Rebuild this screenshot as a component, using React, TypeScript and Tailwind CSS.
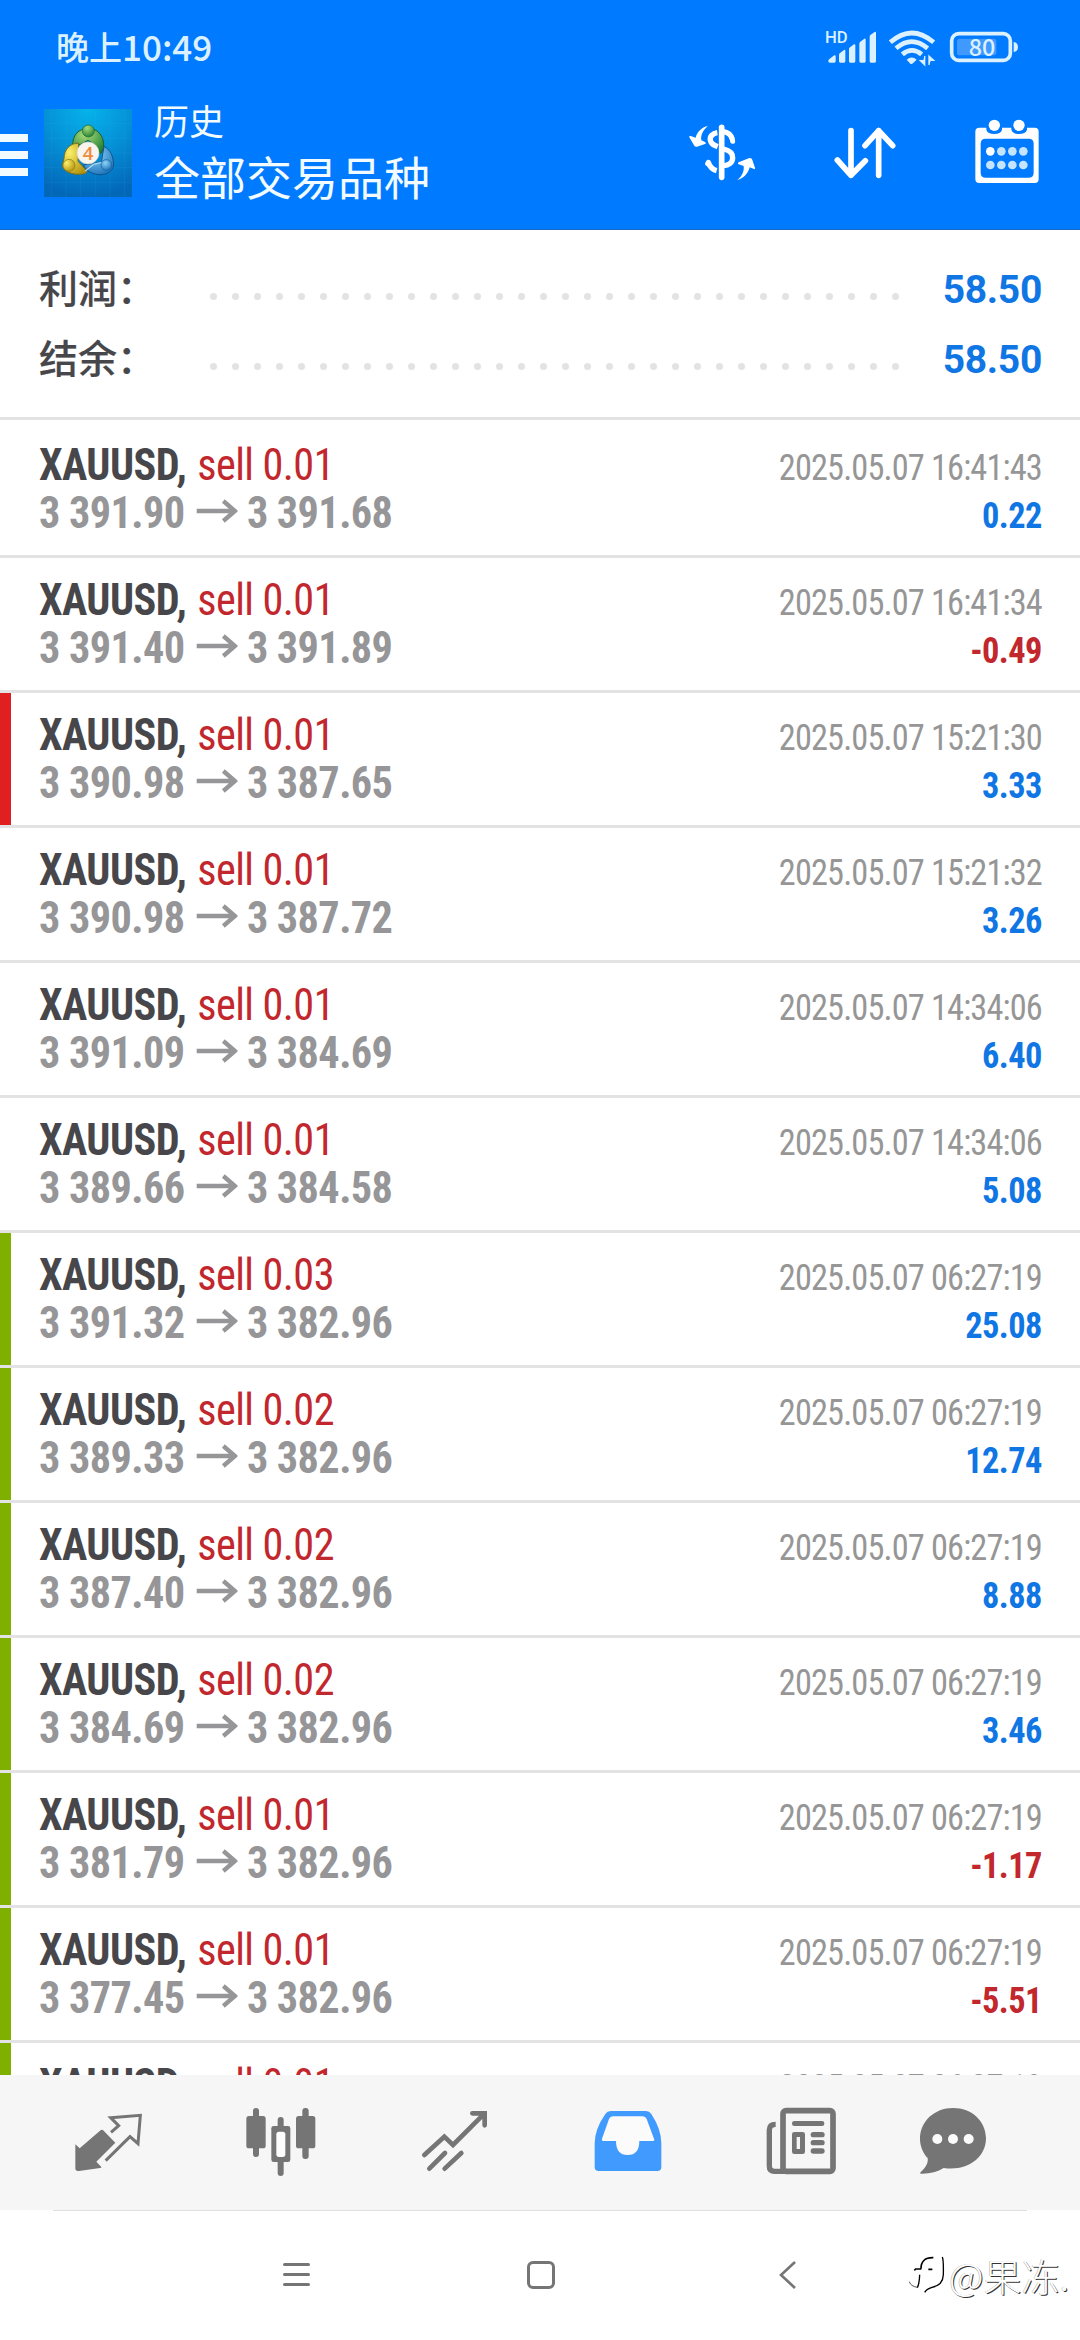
import type { ReactNode } from "react";

type Deal = {
  volume: string;
  open: string;
  close: string;
  time: string;
  profit: string;
  mark?: "red" | "green";
};

const DEALS: Deal[] = [
  { volume: "0.01", open: "3 391.90", close: "3 391.68", time: "2025.05.07 16:41:43", profit: "0.22" },
  { volume: "0.01", open: "3 391.40", close: "3 391.89", time: "2025.05.07 16:41:34", profit: "-0.49" },
  { volume: "0.01", open: "3 390.98", close: "3 387.65", time: "2025.05.07 15:21:30", profit: "3.33", mark: "red" },
  { volume: "0.01", open: "3 390.98", close: "3 387.72", time: "2025.05.07 15:21:32", profit: "3.26" },
  { volume: "0.01", open: "3 391.09", close: "3 384.69", time: "2025.05.07 14:34:06", profit: "6.40" },
  { volume: "0.01", open: "3 389.66", close: "3 384.58", time: "2025.05.07 14:34:06", profit: "5.08" },
  { volume: "0.03", open: "3 391.32", close: "3 382.96", time: "2025.05.07 06:27:19", profit: "25.08", mark: "green" },
  { volume: "0.02", open: "3 389.33", close: "3 382.96", time: "2025.05.07 06:27:19", profit: "12.74", mark: "green" },
  { volume: "0.02", open: "3 387.40", close: "3 382.96", time: "2025.05.07 06:27:19", profit: "8.88", mark: "green" },
  { volume: "0.02", open: "3 384.69", close: "3 382.96", time: "2025.05.07 06:27:19", profit: "3.46", mark: "green" },
  { volume: "0.01", open: "3 381.79", close: "3 382.96", time: "2025.05.07 06:27:19", profit: "-1.17", mark: "green" },
  { volume: "0.01", open: "3 377.45", close: "3 382.96", time: "2025.05.07 06:27:19", profit: "-5.51", mark: "green" },
  { volume: "0.01", open: "3 375.10", close: "3 382.96", time: "2025.05.07 06:27:19", profit: "-7.86", mark: "green" },
];

function StatusBar() {
  return (
    <div className="flex h-24 items-start justify-between pl-14 pr-[60px] text-[#dcf1ff]">
      <div className="flex pt-[22px] text-[33px] leading-[48px] font-medium">
        <span>晚上</span>
        <span className="text-[35px]">10:49</span>
      </div>
      <div className="flex pt-[29px]">
        {/* signal */}
        <svg width="54" height="38" viewBox="552 87 162 114" fill="currentColor">
          <text x="552" y="130" fontSize="50" fontWeight="500" fontFamily="Roboto, sans-serif">
            HD
          </text>
          <path d="M562 183q0-4 4-7l14-10q4-2 4 3v15q0 4-4 4h-14q-4 0-4-4zM594 165q0-4 3-6l12-9q4-2 4 3v31q0 4-4 4h-11q-4 0-4-4zM624 148q0-4 3-6l12-9q4-2 4 3v48q0 4-4 4h-11q-4 0-4-4zM655 131q0-4 3-6l12-9q4-2 4 3v65q0 4-4 4h-11q-4 0-4-4zM686 110q0-4 3-6l12-8q4-2 4 3v85q0 4-4 4h-11q-4 0-4-4z" />
        </svg>
        {/* wifi */}
        <svg className="ml-2" width="50" height="38" viewBox="738 87 150 114" fill="none" stroke="currentColor">
          <path d="M748 127q64-56 130 0" strokeWidth="14" />
          <path d="M765 145q47-40 95 0" strokeWidth="14" />
          <path d="M784 163q29-24 58 0" strokeWidth="14" />
          <path d="M797 179q15-13 30 0l-13 12q-3 2-6 0z" fill="currentColor" stroke="none" />
          <path d="M851 168v27l-13-13h8M864 195v-27l14 13h-8" fill="currentColor" strokeWidth="4" />
        </svg>
        {/* battery */}
        <svg className="ml-[11px]" width="72" height="38" viewBox="921 87 216 114">
          <rect x="932" y="101" width="176" height="80" rx="21" fill="none" stroke="currentColor" strokeWidth="11" />
          <rect x="948" y="116" width="118" height="50" rx="8" fill="#3f99ff" />
          <path d="M1118 126q13 2 13 15t-13 15z" fill="currentColor" />
          <text x="983" y="168" fontSize="70" fontWeight="500" fontFamily="Noto Sans CJK SC, sans-serif" fill="currentColor">
            80
          </text>
        </svg>
      </div>
    </div>
  );
}

function AppLogo() {
  return (
    <svg width="88" height="88" viewBox="0 0 264 264">
      <defs>
        <radialGradient id="bg" cx="0.5" cy="0" r="1">
          <stop offset="0" stopColor="#06b3ea" />
          <stop offset="0.5" stopColor="#0590d6" />
          <stop offset="1" stopColor="#0367b8" />
        </radialGradient>
        <radialGradient id="green" cx="0.4" cy="0.25" r="0.8">
          <stop offset="0" stopColor="#a8dc7a" />
          <stop offset="1" stopColor="#1f7d34" />
        </radialGradient>
        <radialGradient id="yellow" cx="0.3" cy="0.3" r="0.8">
          <stop offset="0" stopColor="#fbf06a" />
          <stop offset="1" stopColor="#b5930f" />
        </radialGradient>
        <radialGradient id="blue" cx="0.4" cy="0.3" r="0.8">
          <stop offset="0" stopColor="#8fd4f7" />
          <stop offset="1" stopColor="#146cb5" />
        </radialGradient>
      </defs>
      <rect width="264" height="264" fill="url(#bg)" />
      <path d="M22 0V264M66 0V264M110 0V264M154 0V264M198 0V264M242 0V264M0 44H264M0 88H264M0 132H264M0 176H264M0 220H264" stroke="#4cc3f0" strokeOpacity="0.15" strokeWidth="2" />
      <path d="M86 112c-2-32 18-54 47-54s48 24 46 56c-1 12-6 18-11 20l-16-28-20-12-22 12z" fill="url(#green)" stroke="#17622d" strokeWidth="3" />
      <path d="M104 103c-26-2-44 20-44 46l-5 20c4 20 30 30 61 26 8-1 13-5 12-10l-26-28z" fill="url(#yellow)" stroke="#7f6f12" strokeWidth="3" />
      <path d="M180 112c20 10 28 30 29 56-3 22-28 33-53 28-18-4-32-14-38-28l54-8z" fill="url(#blue)" stroke="#0f5590" strokeWidth="3" />
      <path d="M124 186l26-21 38-8" fill="none" stroke="#a7dcf5" strokeWidth="4" />
      <circle cx="133" cy="66" r="18" fill="url(#green)" stroke="#1b6a30" strokeWidth="2" />
      <circle cx="75" cy="169" r="18" fill="url(#yellow)" stroke="#8b7a12" strokeWidth="2" />
      <circle cx="187" cy="168" r="16" fill="url(#blue)" stroke="#1360a0" strokeWidth="2" />
      <circle cx="132" cy="132" r="33" fill="#f8f5ef" stroke="#d5d2c4" strokeWidth="2" />
      <text x="132" y="152" textAnchor="middle" fontSize="56" fontWeight="600" fontFamily="Open Sans, sans-serif" fill="#f08a3c">
        4
      </text>
    </svg>
  );
}

function Header() {
  return (
    <header className="h-[230px] shrink-0 border-b border-[#1468c8] bg-[#007aff] text-white">
      <StatusBar />
      <div className="flex h-[133px] items-start">
        <div className="mt-[38px] flex w-7 flex-col gap-[9px]">
          <div className="h-2 bg-[#f2fbff]" />
          <div className="h-2 bg-[#f2fbff]" />
          <div className="h-2 bg-[#f2fbff]" />
        </div>
        <div className="ml-4 mt-[13px]">
          <AppLogo />
        </div>
        <div className="ml-[22px] text-[#f2fbff]">
          <div className="-mt-px text-[35px] leading-[50px]">历史</div>
          <div className="text-[46px] leading-[60px]">全部交易品种</div>
        </div>
        <div className="ml-auto flex pr-[40px] pt-[22px]">
          {/* currency sync */}
          <svg className="mt-0.5" width="70" height="66" viewBox="24 16 210 198" fill="none" stroke="currentColor" strokeLinecap="round">
            <path d="M125 38V188" strokeWidth="17" />
            <path d="M157 74C153 60 143 53 131 51M112 54C97 56 89 66 91 77C93 89 102 92 113 96M131 103C148 107 158 115 158 129C158 144 146 152 131 153M85 143C90 158 99 165 110 168" strokeWidth="16" strokeLinecap="butt" />
            <path d="M157 74l1 6M85 143l-2 4" strokeWidth="15" />
            <path d="M84 33C67 37 51 50 47 69L32 64C29 63 27 65 28 68L42 92C44 96 47 97 51 96L75 88C78 87 78 84 75 82L64 77C61 62 69 46 84 33z" fill="currentColor" stroke="none" />
            <path d="M172 196C190 191 204 178 209 158L222 163C225 164 226 162 225 159L217 136C215 131 211 129 206 131L176 143C173 145 173 148 176 149L191 154C193 171 186 184 172 196z" fill="currentColor" stroke="none" />
          </svg>
          <svg className="ml-[74px] mt-px" width="66" height="66" viewBox="576 357 198 198" fill="none" stroke="currentColor" strokeWidth="17" strokeLinecap="round" strokeLinejoin="round">
            <path d="M633 392V526M592 480L633 526L676 482M716 526V392M675 437L716 392L758 437" />
          </svg>
          <svg className="ml-[76px]" width="66" height="66" viewBox="1001 355 198 198" fill="currentColor">
            <path d="M1017 384H1038V390Q1042 403 1062 403Q1081 403 1085 390V384H1113V390Q1117 403 1136 403Q1156 403 1160 390V384H1183Q1195 384 1195 396V538Q1195 550 1183 550H1017Q1005 550 1005 538V396Q1005 384 1017 384zM1036 417Q1021 417 1021 432V519Q1021 534 1036 534H1165Q1180 534 1180 519V432Q1180 417 1165 417z" fillRule="evenodd" />
            <circle cx="1062" cy="377" r="17" />
            <circle cx="1136" cy="377" r="17" />
            <circle cx="1050" cy="455" r="13" />
            <g fill="#c4e4ff">
              <circle cx="1083" cy="455" r="13" />
              <circle cx="1116" cy="455" r="13" />
              <circle cx="1149" cy="455" r="13" />
              <circle cx="1050" cy="496" r="13" />
              <circle cx="1083" cy="496" r="13" />
              <circle cx="1116" cy="496" r="13" />
              <circle cx="1149" cy="496" r="13" />
            </g>
          </svg>
        </div>
      </div>
    </header>
  );
}

function SummaryRow({ label, value }: { label: string; value: string }) {
  return (
    <div className="flex h-[70px] items-center justify-between pl-[39px] pr-[38px]">
      <span className="mb-[5px] w-[171px] text-[39px] leading-[65px] font-medium text-[#47474b] [-webkit-text-stroke:0.15px]">{label}</span>
      <div className="mt-[14px] flex w-[689px] justify-between">
        {Array.from({ length: 32 }, (_, i) => (
          <i key={i} className="size-[7px] rounded-full bg-[#e3e3e3]" />
        ))}
      </div>
      <span className="ml-auto mt-0.5 font-[Roboto] text-[39px] font-bold tracking-[-0.3px] text-[#1076e4]">{value}</span>
    </div>
  );
}

function DealRow({ deal }: { deal: Deal }) {
  const loss = deal.profit.startsWith("-");
  return (
    <div className="relative flex h-[135px] shrink-0 justify-between border-b-[3px] border-[#e3e3e3] pl-[39px] pr-[38px] font-['Roboto_Condensed',Roboto] font-stretch-75%">
      {deal.mark && (
        <div className={`absolute inset-y-0 left-0 w-[11px] ${deal.mark === "red" ? "bg-[#e02020]" : "bg-[#7fb000]"}`} />
      )}
      <div className="origin-left scale-x-[0.96] pt-[18px] text-[44px] leading-[48px] tracking-[-0.6px] whitespace-nowrap">
        <div>
          <span className="font-bold text-[#47474b]">XAUUSD,</span>{" "}
          <span className="ml-0.5 text-[#c1272d]">sell {deal.volume}</span>
        </div>
        <div className="flex items-center font-bold text-[#969698]">
          <span>{deal.open}</span>
          <svg className="ml-[12px] mr-[10px] mt-[-4px]" width="43" height="24" viewBox="0 0 43 24" fill="none" stroke="currentColor" strokeWidth="4.5">
            <path d="M0 12H40M28 2L40 12L28 22" />
          </svg>
          <span>{deal.close}</span>
        </div>
      </div>
      <div className="origin-right scale-x-[0.94] pt-[21px] text-right text-[36.5px] leading-[48px] whitespace-nowrap">
        <div className="tracking-[-0.9px] text-[#969696]">{deal.time}</div>
        <div className={`font-bold tracking-[-0.6px] ${loss ? "text-[#c1272d]" : "text-[#1076e4]"}`}>{deal.profit}</div>
      </div>
    </div>
  );
}

function TabIcon({ box, className, children }: { box: string; className?: string; children: ReactNode }) {
  return (
    <svg width="70" height="70" viewBox={box} className={className} fill="currentColor">
      {children}
    </svg>
  );
}

function TabBar() {
  return (
    <nav className="flex h-[135px] shrink-0 items-start bg-[#f6f6f6] pl-[73px] pt-8 text-[#757575]">
      <TabIcon box="39 51 210 210">
        <path d="M46 163l13 12 61-53q6-5 11 0l35 36-57 57 15 16q1 3-4 3l-63 9q-11 2-11-8z" />
        <path d="M153 127l23-20-24-24 89-7-7 85-24-21-73 72" fill="none" stroke="currentColor" strokeWidth="9" />
      </TabIcon>
      <TabIcon box="559 51 210 210" className="ml-[103px]">
        <rect x="580" y="54" width="18" height="147" rx="9" />
        <rect x="728" y="54" width="19" height="153" rx="9" />
        <rect x="560" y="78" width="58" height="97" rx="8" />
        <rect x="709" y="78" width="58" height="97" rx="8" />
        <rect x="654" y="81" width="18" height="40" rx="9" />
        <rect x="654" y="205" width="18" height="53" rx="9" />
        <path d="M642 108h43q7 0 7 7v94q0 7-7 7h-43q-7 0-7-7v-94q0-7 7-7z" />
        <rect x="650" y="125" width="27" height="76" rx="8" fill="#fdfdfd" />
      </TabIcon>
      <TabIcon box="1079 51 210 210" className="ml-[104px]">
        <path d="M1092 195L1152 140L1178 165L1272 71M1236 70H1273V106M1107 236L1154 189M1153 236L1203 189" fill="none" stroke="currentColor" strokeWidth="14" strokeLinecap="round" />
      </TabIcon>
      <TabIcon box="38 51 210 210" className="ml-[103px] text-[#419bff]">
        <path d="M98 79Q89 79 86 87L65 146Q63 153 70 153H107Q107 195 142 195Q177 195 177 153H216Q224 153 221 146L199 87Q196 79 187 79z" fill="#fbfbfb" />
        <path d="M91 63H197Q207 63 213 72Q243 118 243 160V231Q243 243 231 243H55Q43 243 43 231V160Q43 118 75 72Q81 63 91 63zM98 79Q89 79 86 87L65 146Q63 153 70 153H107Q107 195 142 195Q177 195 177 153H216Q224 153 221 146L199 87Q196 79 187 79z" fillRule="evenodd" />
      </TabIcon>
      <TabIcon box="558 51 210 210" className="ml-[103px]">
        <path d="M587 103Q568 103 568 120V228Q568 244 584 244H620" fill="none" stroke="currentColor" strokeWidth="16" />
        <rect x="609" y="62" width="150" height="182" rx="9" fill="none" stroke="currentColor" strokeWidth="17" />
        <rect x="636" y="93" width="97" height="15" rx="7" />
        <path d="M643 126h25q7 0 7 7v52q0 7-7 7h-25q-7 0-7-7v-52q0-7 7-7zM650 141v36h10v-36z" fillRule="evenodd" />
        <rect x="692" y="126" width="42" height="16" rx="8" />
        <rect x="692" y="150" width="42" height="16" rx="8" />
        <rect x="692" y="175" width="42" height="16" rx="8" />
      </TabIcon>
      <TabIcon box="1014 51 210 210" className="ml-[82px]">
        <path d="M1119 54C1176 54 1218 94 1218 145C1218 204 1161 245 1091 234C1072 246 1048 252 1022 251Q1018 249 1023 245C1039 231 1045 218 1043 204C1029 190 1020 168 1020 147C1020 94 1063 54 1119 54z" />
        <circle cx="1072" cy="147" r="15" fill="#fbfbfb" />
        <circle cx="1119" cy="147" r="15" fill="#fbfbfb" />
        <circle cx="1166" cy="147" r="15" fill="#fbfbfb" />
      </TabIcon>
    </nav>
  );
}

function SystemNav() {
  return (
    <div className="h-[130px] shrink-0 bg-white">
      <div className="mx-[53px] h-px bg-[#dedede]" />
      <div className="flex items-start text-[#757575]">
        <div className="ml-[283px] mt-[52px] flex w-[27px] flex-col gap-[7px]">
          <div className="h-[3px] rounded-full bg-current" />
          <div className="h-[3px] rounded-full bg-current" />
          <div className="h-[3px] rounded-full bg-current" />
        </div>
        <div className="ml-[217px] mt-[50px] h-7 w-[28px] rounded-[6px] border-[3px] border-current" />
        <svg className="ml-[224px] mt-[50px]" width="18" height="28" viewBox="0 0 18 28" fill="none" stroke="currentColor" strokeWidth="2.6">
          <path d="M16 1L2 14L16 27" />
        </svg>
        <div className="ml-[112px] mt-[37px] flex items-center">
          <svg width="38" height="44" viewBox="388 100 114 132" fill="none" stroke="#000">
            <path d="M424 147Q424 113 461 114M404 152l4-4h17M446 149h12" strokeWidth="5" />
            <path d="M389 186q4 14 24 17" strokeWidth="2" />
            <path d="M420 165Q419 192 413 204M488 112Q492 122 491 165Q490 196 457 203Q440 208 435 218" strokeWidth="4" />
          </svg>
          <span className="ml-0.5 text-[38px] leading-[54px] font-light whitespace-nowrap text-white [text-shadow:1px_1px_0_#333,-0.5px_-0.5px_0.5px_#aaa]">
            @果冻.
          </span>
        </div>
      </div>
    </div>
  );
}

export default function App() {
  return (
    <div className="flex h-[2340px] w-[1080px] flex-col overflow-hidden bg-white font-['Noto_Sans_CJK_SC',sans-serif]">
      <Header />
      <section className="h-[190px] shrink-0 border-b-[3px] border-[#e3e3e3] pt-6">
        <SummaryRow label="利润：" value="58.50" />
        <SummaryRow label="结余：" value="58.50" />
      </section>
      <main className="flex min-h-0 flex-1 flex-col overflow-hidden pt-[3px]">
        {DEALS.map((deal, i) => (
          <DealRow key={i} deal={deal} />
        ))}
      </main>
      <TabBar />
      <SystemNav />
    </div>
  );
}
